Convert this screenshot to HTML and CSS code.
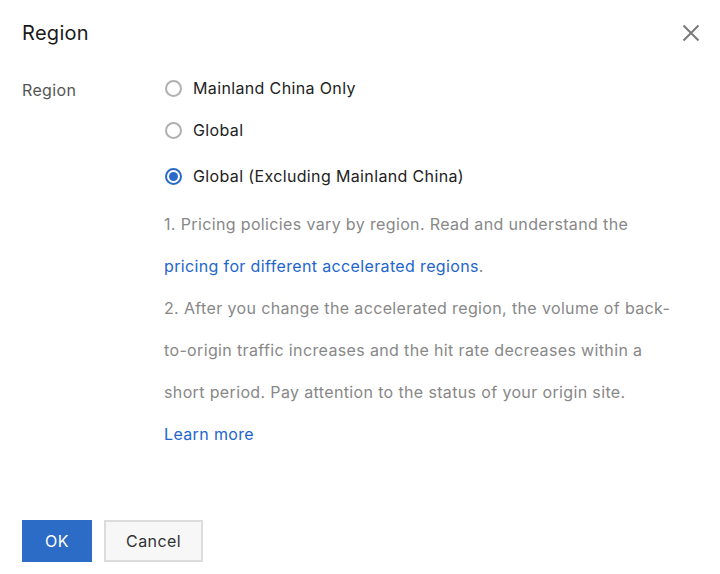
FILE: index.html
```html
<!DOCTYPE html>
<html lang="en">
<head>
<meta charset="utf-8">
<title>Region</title>
<link rel="stylesheet" href="styles.css">
</head>
<body>
<div class="dialog">
  <header class="dialog-header">
    <h1 class="dialog-title">Region</h1>
    <button class="close-btn" aria-label="Close">
      <svg width="18" height="18" viewBox="0 0 18 18"><path d="M1.5 1.5 L16.5 16.5 M16.5 1.5 L1.5 16.5" stroke="#7a7a7a" stroke-width="2" fill="none"/></svg>
    </button>
  </header>
  <div class="form-row">
    <div class="field-label">Region</div>
    <div class="field-control">
      <label class="radio-row"><span class="radio"></span><span class="radio-text">Mainland China Only</span></label>
      <label class="radio-row"><span class="radio"></span><span class="radio-text">Global</span></label>
      <label class="radio-row checked"><span class="radio"></span><span class="radio-text">Global (Excluding Mainland China)</span></label>
      <div class="help">
        <p>1. Pricing policies vary by region. Read and understand the <a href="#">pricing for different accelerated regions</a>.</p>
        <p>2. After you change the accelerated region, the volume of back-to-origin traffic increases and the hit rate decreases within a short period. Pay attention to the status of your origin site.</p>
        <p><a href="#">Learn more</a></p>
      </div>
    </div>
  </div>
  <footer class="dialog-footer">
    <button class="btn btn-primary">OK</button>
    <button class="btn btn-default">Cancel</button>
  </footer>
</div>
</body>
</html>
```
FILE: styles.css
```css
* { box-sizing: border-box; }
html, body { margin: 0; padding: 0; background: #fff; }
body {
  font-family: Inter, "Noto Sans", "Liberation Sans", sans-serif;
  font-size: 16px;
  letter-spacing: 0.36px;
  color: #333;
  width: 720px;
  height: 574px;
  overflow: hidden;
}
.dialog { padding: 0 22px; }
.dialog-header {
  height: 66px;
  display: flex;
  align-items: center;
  justify-content: space-between;
}
.dialog-title {
  margin: 0;
  font-size: 20px;
  font-weight: 400;
  letter-spacing: 0.3px;
  color: #1a1a1a;
}
.close-btn {
  border: 0;
  background: none;
  padding: 0;
  margin-right: -2px;
  width: 18px;
  height: 18px;
  display: flex;
}
.form-row { display: flex; margin-top: 1px; }
.field-label {
  width: 142px;
  flex: none;
  color: #555;
  line-height: 42px;
  padding-top: 2px;
}
.field-control { flex: 1; }
.radio-row {
  display: flex;
  align-items: center;
  height: 42px;
  gap: 11px;
  color: #222;
}
.radio-row.checked { margin-top: 4px; }
.radio {
  width: 17px;
  height: 17px;
  border: 2px solid #b0b0b0;
  border-radius: 50%;
  margin-left: 1px;
  flex: none;
  position: relative;
}
.checked .radio {
  border-color: #2b6bc8;
}
.checked .radio::after {
  content: "";
  position: absolute;
  left: 2px; top: 2px;
  width: 9px; height: 9px;
  border-radius: 50%;
  background: #2b6bc8;
}
.help {
  margin-top: 6px;
  color: #888;
  line-height: 42px;
  width: 512px;
}
.help p { margin: 0; }
.help a { color: #2266cc; text-decoration: none; }
.dialog-footer {
  margin-top: 65px;
  display: flex;
  gap: 12px;
}
.btn {
  height: 42px;
  font-family: inherit;
  font-size: 16px;
  letter-spacing: 0.4px;
  padding: 0;
}
.btn-primary {
  width: 70px;
  background: #2c6bc6;
  color: #fff;
  border: 0;
}
.btn-default {
  width: 99px;
  background: #f7f7f7;
  border: 2px solid #dcdcdc;
  color: #333;
}
```
